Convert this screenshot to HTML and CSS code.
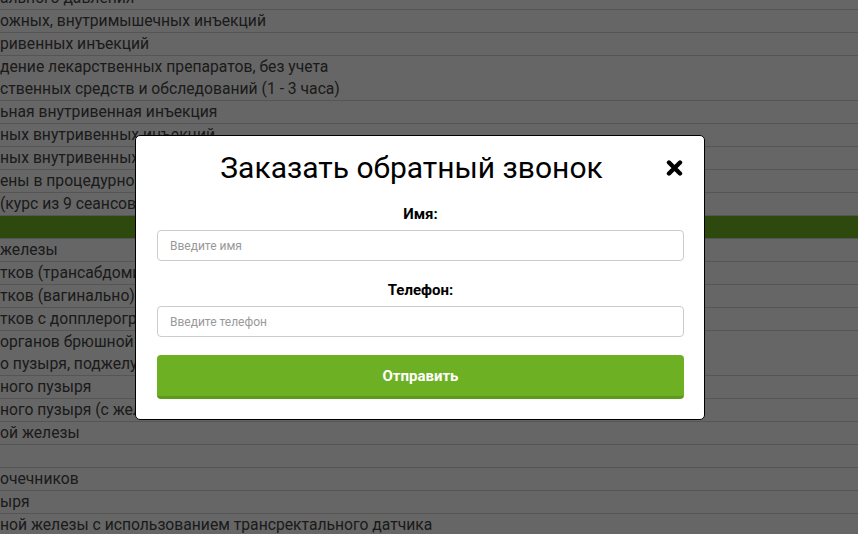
FILE: index.html
```html
<!DOCTYPE html>
<html lang="ru">
<head>
    <meta charset="utf-8">
    <title>Услуги и цены</title>
    <meta name="viewport" content="width=device-width, initial-scale=1">
    <link rel="stylesheet" href="styles.css">
</head>
<body>
    <div class="price-list">
        <div class="price-row">ального давления</div>
        <div class="price-row">ожных, внутримышечных инъекций</div>
        <div class="price-row">ривенных инъекций</div>
        <div class="price-row">дение лекарственных препаратов, без учета<br>ственных средств и обследований (1 - 3 часа)</div>
        <div class="price-row">ьная внутривенная инъекция</div>
        <div class="price-row">ных внутривенных инъекций</div>
        <div class="price-row">ных внутривенных вливаний</div>
        <div class="price-row">ены в процедурном кабинете</div>
        <div class="price-row">(курс из 9 сеансов)</div>
        <div class="price-row price-head">&nbsp;</div>
        <div class="price-row">железы</div>
        <div class="price-row">тков (трансабдоминально)</div>
        <div class="price-row">тков (вагинально)</div>
        <div class="price-row">тков с допплерографией</div>
        <div class="price-row">органов брюшной полости<br>о пузыря, поджелудочной железы, селезенки)</div>
        <div class="price-row">ного пузыря</div>
        <div class="price-row">ного пузыря (с желчегонным завтраком)</div>
        <div class="price-row">ой железы</div>
        <div class="price-row">&nbsp;</div>
        <div class="price-row">очечников</div>
        <div class="price-row">ыря</div>
        <div class="price-row">ной железы с использованием трансректального датчика</div>
    </div>

    <!-- callback popup -->
    <div class="overlay">
        <div class="modal">
            <div class="modal-head">
                <h2>Заказать обратный звонок</h2>
                <span class="modal-close">
                    <svg width="17" height="16" viewBox="0 0 17 16">
                        <path d="M3 2.5 L14 13.5 M14 2.5 L3 13.5" stroke="#000" stroke-width="4.4" stroke-linecap="round" fill="none"/>
                    </svg>
                </span>
            </div>
            <form class="callback-form">
                <div class="form-item">
                    <label for="cb-name">Имя:</label>
                    <input type="text" id="cb-name" name="name" placeholder="Введите имя">
                </div>
                <div class="form-item">
                    <label for="cb-phone">Телефон:</label>
                    <input type="tel" id="cb-phone" name="phone" placeholder="Введите телефон">
                </div>
                <button type="submit" class="btn">Отправить</button>
            </form>
        </div>
    </div>
</body>
</html>
```

FILE: styles.css
```css
body {
    font-family: Roboto, "Liberation Sans", Arial, sans-serif;
    background-color: #fff;
    margin: 0;
    padding: 0;
    overflow: hidden;
}

.price-list {
    margin-top: -13px;
}

.price-row {
    font-size: 15.7px;
    line-height: 22px;
    color: #444;
    border-bottom: 1px solid #d4d4d4;
    white-space: nowrap;
}

.price-head {
    background-color: #72b624;
}

.overlay {
    position: fixed;
    top: 0;
    left: 0;
    right: 0;
    bottom: 0;
    background-color: rgba(0, 0, 0, 0.6);
    padding: 135px 0 0 135px;
}

.modal {
    width: 527px;
    background-color: #fff;
    border: 1px solid #000;
    border-radius: 5px;
    padding: 14px 20px 20px 21px;
}

.modal-head {
    display: flex;
    align-items: center;
    margin-bottom: 18px;
}

.modal-head h2 {
    flex: 1;
    margin: 0;
    font-size: 30px;
    font-weight: 400;
    line-height: 36px;
    color: #000;
    text-align: center;
}

.modal-close {
    display: flex;
    width: 17px;
    height: 16px;
    margin-right: 1px;
    cursor: pointer;
}

.callback-form .form-item {
    margin-bottom: 19px;
}

.callback-form .form-item:last-of-type {
    margin-bottom: 18px;
}

.callback-form label {
    display: block;
    text-align: center;
    font-size: 15px;
    font-weight: 700;
    line-height: 20px;
    color: #000;
    margin-bottom: 6px;
}

.callback-form input {
    display: block;
    width: 100%;
    height: 31px;
    box-sizing: border-box;
    padding: 0 12px;
    font-family: inherit;
    font-size: 12px;
    border: 1px solid #ccc;
    border-radius: 4px;
}

.callback-form input::placeholder {
    color: #999;
}

.callback-form .btn {
    display: block;
    width: 100%;
    height: 44px;
    background-color: #6eb024;
    border: none;
    border-bottom: 3px solid #5c9a1c;
    border-radius: 4px;
    color: #fff;
    font-family: inherit;
    font-size: 15px;
    font-weight: 700;
    cursor: pointer;
}
```
